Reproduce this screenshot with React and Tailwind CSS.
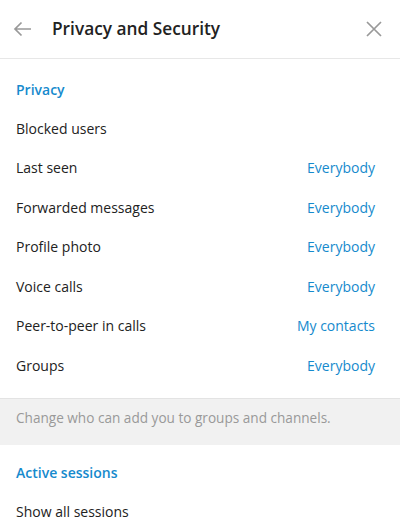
import React from 'react';

const rows = [
  { label: 'Blocked users' },
  { label: 'Last seen', value: 'Everybody' },
  { label: 'Forwarded messages', value: 'Everybody' },
  { label: 'Profile photo', value: 'Everybody' },
  { label: 'Voice calls', value: 'Everybody' },
  { label: 'Peer-to-peer in calls', value: 'My contacts' },
  { label: 'Groups', value: 'Everybody' },
];

const Row = ({ label, value }) => (
  <div className="flex items-center justify-between h-[39.5px] pl-4 pr-[25px]">
    <span className="text-[#222222]">{label}</span>
    {value && <span className="text-[#168acd]">{value}</span>}
  </div>
);

const App = () => {
  return (
    <div className="w-[400px] h-[532px] bg-white overflow-hidden text-[14px] leading-none" style={{ fontFamily: '"Open Sans", sans-serif' }}>
      <div className="flex items-center h-[59px] border-b border-[#e7e7e7]">
        <div className="w-[52px] flex pl-[13px]">
          <svg width="19" height="16" viewBox="0 0 19 16" fill="none" stroke="#999999" strokeWidth="1.7">
            <path d="M18 8H2.5M8.5 1.5L2 8l6.5 6.5" />
          </svg>
        </div>
        <h1 className="flex-1 text-[17.3px] font-semibold text-[#222222]">Privacy and Security</h1>
        <div className="w-[50px] flex justify-center pr-[2px]">
          <svg width="16" height="16" viewBox="0 0 16 16" stroke="#999999" strokeWidth="1.7">
            <path d="M1 1l14 14M15 1L1 15" />
          </svg>
        </div>
      </div>

      <div className="pt-[11px] pb-[12px]">
        <div className="h-[39px] flex items-center pl-4 font-semibold text-[#168acd]">Privacy</div>
        {rows.map((r) => (
          <Row key={r.label} label={r.label} value={r.value} />
        ))}
      </div>

      <div className="bg-[#f1f1f1] border-t border-[#e3e3e3] h-[47px] pl-4 pt-[12px] text-[13.6px] text-[#999999]">
        Change who can add you to groups and channels.
      </div>

      <div className="pt-[9px]">
        <div className="h-[39px] flex items-center pl-4 font-semibold text-[#168acd]">Active sessions</div>
        <Row label="Show all sessions" />
      </div>
    </div>
  );
};

export default App;
